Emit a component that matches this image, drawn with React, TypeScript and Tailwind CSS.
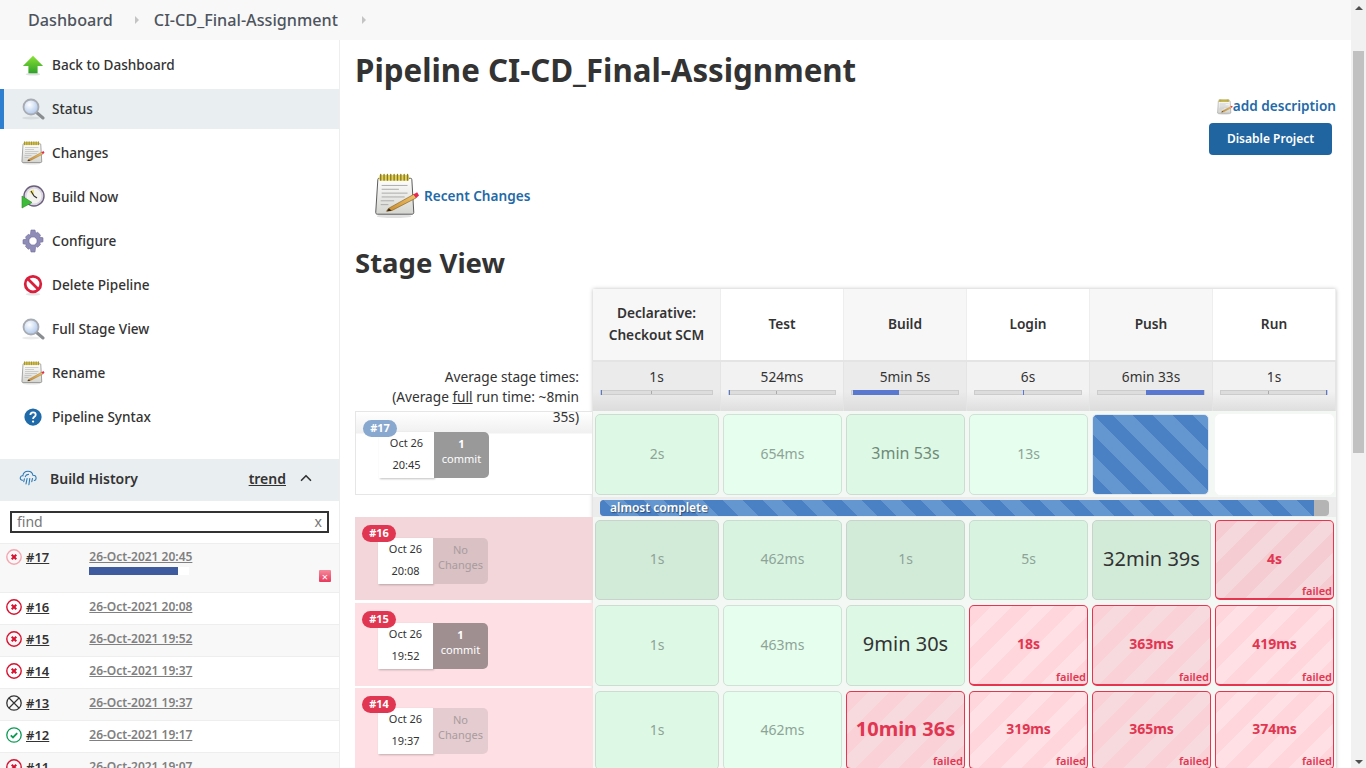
import { ChevronUp } from "lucide-react";

const NotepadIcon = ({ className }: { className: string }) => (
  <svg viewBox="0 0 48 48" className={className}>
    <defs>
      <linearGradient id="padBody" x1="0" y1="0" x2="0" y2="1">
        <stop offset="0" stopColor="#ffffff" />
        <stop offset="1" stopColor="#d4d4d0" />
      </linearGradient>
      <linearGradient id="padPencil" x1="0" y1="1" x2="1" y2="0">
        <stop offset="0" stopColor="#c98a2e" />
        <stop offset="1" stopColor="#f1c46a" />
      </linearGradient>
    </defs>
    <ellipse cx="21" cy="45" rx="18" ry="2" fill="#000" opacity="0.12" />
    <path d="M5 5.5h33c1 0 1.5.5 1.5 1.5l2 34c0 1.2-.6 2-1.8 2H3.5C2.3 43 1.700 42.200 1.800 41L4 7c0-1 .4-1.500 1-1.500z" fill="url(#padBody)" stroke="#555" strokeWidth="1" />
    <rect x="5.500" y="2" width="31" height="6" rx="1" fill="#e3d25a" />
    <path d="M7 1.500v6M10.500 1.500v6M14 1.500v6M17.500 1.500v6M21 1.500v6M24.500 1.500v6M28 1.500v6M31.500 1.500v6M35 1.500v6" stroke="#8a7a20" strokeWidth="1.400" strokeLinecap="round" />
    <path d="M8 13h27M8 17h18M8 21h27M8 25h24M7 29h14M7 33h8" stroke="#a9a9a9" strokeWidth="1" />
    <path d="M15 37l27-15 2 4-25 13-6 1z" fill="url(#padPencil)" stroke="#7a5a20" strokeWidth="0.600" />
    <path d="M41 22.500l4-2.500 2 3.500-3 2.500z" fill="#e8284f" />
    <path d="M13.500 39.800l2-3 3 2.500z" fill="#3a2a14" />
  </svg>
);

const ArrowUpIcon = () => (
  <svg viewBox="0 0 24 24" className="w-[22px] h-[22px]">
    <defs>
      <linearGradient id="upArrow" x1="0" y1="0" x2="0" y2="1">
        <stop offset="0" stopColor="#8ae234" />
        <stop offset="1" stopColor="#2fa12a" />
      </linearGradient>
    </defs>
    <ellipse cx="12" cy="22" rx="8" ry="1.500" fill="#000" opacity="0.12" />
    <path d="M12 2l11 11h-6v8H7v-8H1z" fill="url(#upArrow)" />
  </svg>
);

const SearchIcon = () => (
  <svg viewBox="0 0 24 24" className="w-[24px] h-[24px]">
    <defs>
      <radialGradient id="lens" cx="0.400" cy="0.350" r="0.700">
        <stop offset="0" stopColor="#ffffff" />
        <stop offset="1" stopColor="#a9c4ea" />
      </radialGradient>
    </defs>
    <ellipse cx="10" cy="21" rx="9" ry="1.500" fill="#000" opacity="0.08" />
    <path d="M15 15l7 6" stroke="#8a8d90" strokeWidth="3" strokeLinecap="round" />
    <circle cx="10" cy="10" r="7.500" fill="url(#lens)" stroke="#a8acb2" strokeWidth="1.800" />
  </svg>
);

const ClockPlayIcon = () => (
  <svg viewBox="0 0 24 24" className="w-[24px] h-[24px]">
    <circle cx="13" cy="11" r="10" fill="#d9d5e2" stroke="#6b5f7c" strokeWidth="1.400" />
    <circle cx="13" cy="11" r="7.500" fill="#f4f3f0" />
    <path d="M13 11V4.500A6.500 6.500 0 0 0 8 7z" fill="#f0e48a" />
    <path d="M13 11l-3-5M13 11l3 2" stroke="#333" strokeWidth="1.200" />
    <path d="M1 11l10 6.500L1 23z" fill="#3fbb3a" stroke="#2a8a26" strokeWidth="0.600" />
  </svg>
);

const GearIcon = () => (
  <svg viewBox="0 0 24 24" className="w-[24px] h-[24px]">
    <path
      d="M10 1h4l.7 3.200 2-.9 2.800 2.800-1 2 3.500.7v4l-3.500.7 1 2-2.800 2.800-2-1L14 23h-4l-.7-3.700-2 1-2.800-2.800 1-2L2 14.800v-4l3.500-.7-1-2 2.800-2.800 2 .9z"
      fill="#8f8cb8"
      stroke="#6f6c98"
      strokeWidth="0.600"
    />
    <circle cx="12" cy="12" r="4.200" fill="#ffffff" stroke="#6f6c98" strokeWidth="0.800" />
  </svg>
);

const NoEntryIcon = () => (
  <svg viewBox="0 0 24 24" className="w-[22px] h-[22px]">
    <ellipse cx="12" cy="22" rx="8" ry="1.500" fill="#000" opacity="0.10" />
    <circle cx="12" cy="11" r="8.500" fill="#fff" stroke="#d81f3c" strokeWidth="3" />
    <path d="M6 5l12 12" stroke="#d81f3c" strokeWidth="3" />
  </svg>
);

const HelpIcon = () => (
  <svg viewBox="0 0 24 24" className="w-[18px] h-[18px]">
    <circle cx="12" cy="12" r="11.500" fill="#1f6aa8" />
    <path d="M8.500 9.300c0-2.200 1.600-3.500 3.600-3.500s3.500 1.200 3.500 3.100c0 2.900-3.500 2.700-3.500 5.600" fill="none" stroke="#fff" strokeWidth="2.400" />
    <circle cx="12.100" cy="18" r="1.500" fill="#fff" />
  </svg>
);

const RainIcon = () => (
  <svg viewBox="0 0 20 20" fill="none" stroke="#2a78b8" strokeWidth="1.200" strokeLinecap="round" className="w-[18px] h-[18px]">
    <path d="M4 12.500C2 12.500 1 11 1.500 9.300 2 7.800 3.300 7.300 4.300 7.500 4.700 4.500 7 2.500 10 2.500c3 0 5 2 5.500 4.500 1.900 0 3.500 1.300 3.500 3.200 0 1.300-.8 2.300-2 2.500" />
    <path d="M7 8.500c.5-1.700 2-2.500 3.500-2.500M6 11l-.7 3M9 10.500l-1.200 6M12 10.500l-1 7M15 10.500l-.8 3.500" />
  </svg>
);

const StatusIcon = ({ kind }: { kind: string }) => {
  if (kind === "ok") {
    return (
      <svg viewBox="0 0 16 16" fill="none" className="w-[16px] h-[16px] shrink-0">
        <circle cx="8" cy="8" r="7.200" stroke="#0b9b54" strokeWidth="1.300" />
        <path d="M4.800 8.300l2.200 2.200 4.200-4.300" stroke="#0b9b54" strokeWidth="1.800" />
      </svg>
    );
  }
  if (kind === "aborted") {
    return (
      <svg viewBox="0 0 16 16" fill="none" className="w-[16px] h-[16px] shrink-0">
        <circle cx="8" cy="8" r="7.200" stroke="#333" strokeWidth="1.300" />
        <path d="M3 3l10 10M13 3L3 13" stroke="#333" strokeWidth="1.200" />
      </svg>
    );
  }
  return (
    <svg viewBox="0 0 16 16" fill="none" className="w-[16px] h-[16px] shrink-0">
      <circle cx="8" cy="8" r="7.200" stroke={kind === "running" ? "#f5a6b0" : "#d9112f"} strokeWidth="1.400" />
      <path d="M5.700 5.700l4.600 4.600M10.300 5.700l-4.600 4.600" stroke="#d9112f" strokeWidth="2" />
    </svg>
  );
};

const navItems = [
  { label: "Back to Dashboard", icon: <ArrowUpIcon /> },
  { label: "Status", icon: <SearchIcon />, active: true },
  { label: "Changes", icon: <NotepadIcon className="w-[24px] h-[24px]" /> },
  { label: "Build Now", icon: <ClockPlayIcon /> },
  { label: "Configure", icon: <GearIcon /> },
  { label: "Delete Pipeline", icon: <NoEntryIcon /> },
  { label: "Full Stage View", icon: <SearchIcon /> },
  { label: "Rename", icon: <NotepadIcon className="w-[24px] h-[24px]" /> },
  { label: "Pipeline Syntax", icon: <HelpIcon /> },
];

const historyRows = [
  { id: "#16", date: "26-Oct-2021 20:08", kind: "fail" },
  { id: "#15", date: "26-Oct-2021 19:52", kind: "fail" },
  { id: "#14", date: "26-Oct-2021 19:37", kind: "fail" },
  { id: "#13", date: "26-Oct-2021 19:37", kind: "aborted" },
  { id: "#12", date: "26-Oct-2021 19:17", kind: "ok" },
  { id: "#11", date: "26-Oct-2021 19:07", kind: "fail" },
];

const Sidebar = () => (
  <aside className="w-[340px] shrink-0 border-r border-[#eeeeee] overflow-hidden">
    <nav className="pt-[5px] flex flex-col gap-[4px]">
      {navItems.map((item) => (
        <a
          key={item.label}
          className={
            item.active
              ? "flex items-center h-[40px] pl-[17px] border-l-4 border-[#2f7fd0] bg-[#e9eef1] text-[13.6px] font-medium text-[#333333]"
              : "flex items-center h-[40px] pl-[21px] text-[13.6px] font-medium text-[#333333]"
          }
        >
          <span className="w-[24px] flex justify-center shrink-0">{item.icon}</span>
          <span className="ml-[7px]">{item.label}</span>
        </a>
      ))}
    </nav>

    <div className="mt-[22px] flex items-center h-[42px] bg-[#e9eef1] pl-[19px] pr-[24px] pb-[4px]">
      <RainIcon />
      <span className="ml-[13px] text-[14px] font-semibold text-[#333333]">Build History</span>
      <span className="ml-auto text-[14px] font-semibold text-[#333333] underline">trend</span>
      <ChevronUp className="ml-[11px] w-[18px] h-[18px] text-[#333333]" strokeWidth={2.200} />
    </div>

    <div className="px-[10px] pt-[10px] pb-[10px]">
      <div className="flex items-center justify-between h-[22px] border-2 border-[#333333] pl-[5px] pr-[5px] pb-[2px] text-[14px] text-[#777777]">
        <span>find</span>
        <span>x</span>
      </div>
    </div>

    <div className="relative h-[50px] bg-[#f8f8f8] border-y border-[#eeeeee] flex pl-[6px] pt-[5px]">
      <StatusIcon kind="running" />
      <span className="ml-[4px] text-[13px] leading-[16px] font-semibold text-[#333333] underline">#17</span>
      <div className="ml-[40px]">
        <div className="text-[12px] leading-[16px] font-semibold text-[#808080] underline">26-Oct-2021 20:45</div>
        <div className="mt-[2px] w-[100px] h-[8px] bg-white">
          <div className="w-[89px] h-[8px] bg-[#3f5ba0]" />
        </div>
      </div>
      <span className="absolute right-[8px] top-[26px] w-[12px] h-[12px] flex items-center justify-center rounded-[1px] bg-[linear-gradient(#f58a9c,#e8385a)] text-white text-[11px] leading-none">×</span>
    </div>

    {historyRows.map((row, i) => (
      <div
        key={row.id}
        className={
          i % 2 === 1
            ? "h-[32px] bg-[#f8f8f8] border-b border-[#eeeeee] flex pl-[6px] pt-[6px]"
            : "h-[32px] bg-white border-b border-[#eeeeee] flex pl-[6px] pt-[6px]"
        }
      >
        <StatusIcon kind={row.kind} />
        <span className="ml-[4px] text-[13px] leading-[16px] font-semibold text-[#333333] underline">{row.id}</span>
        <span className="ml-[40px] text-[12px] leading-[16px] font-semibold text-[#808080] underline">{row.date}</span>
      </div>
    ))}
  </aside>
);

const stageHeads = [
  { name: "Declarative: Checkout SCM", alt: true },
  { name: "Test", alt: false },
  { name: "Build", alt: true },
  { name: "Login", alt: false },
  { name: "Push", alt: true },
  { name: "Run", alt: false },
];

const averages = [
  { time: "1s", left: "0%", width: "1%", tick: "45%" },
  { time: "524ms", left: "0%", width: "1%", tick: "44%" },
  { time: "5min 5s", left: "1%", width: "43%", tick: "" },
  { time: "6s", left: "45%", width: "1%", tick: "" },
  { time: "6min 33s", left: "45%", width: "55%", tick: "" },
  { time: "1s", left: "99%", width: "1%", tick: "44%" },
];

type CellData = { text: string; size: string; tone: string; color?: string };

const toneClasses: Record<string, string> = {
  okA: "bg-[#ddf9e5] border-[#ccdcd1]",
  okB: "bg-[#e5feed] border-[#cfe2d5]",
  okDarkA: "bg-[#d2ebd9] border-[#c8d4cb]",
  okDarkB: "bg-[#d8f4e1] border-[#c8dccf]",
  run: "mr-[2px] bg-[repeating-linear-gradient(45deg,#4a80c4_0,#4a80c4_14px,#6496cf_14px,#6496cf_28px)] border-[#dfe6ee]",
  failA: "bg-[repeating-linear-gradient(135deg,#ffd6db_0,#ffd6db_15px,#ffe1e5_15px,#ffe1e5_30px)] border-[#e8354f] border-b-2",
  failB: "bg-[repeating-linear-gradient(135deg,#f9d1d6_0,#f9d1d6_15px,#f7dade_15px,#f7dade_30px)] border-[#e8354f] border-b-2",
  failDark: "bg-[repeating-linear-gradient(135deg,#f4ccd1_0,#f4ccd1_15px,#f4d8db_15px,#f4d8db_30px)] border-[#e8354f] border-b-2",
  empty: "bg-white border-white",
};

const sizeClasses: Record<string, string> = {
  sm: "text-[14px]",
  md: "text-[16px]",
  lg: "text-[20px]",
};

const Cell = ({ cell }: { cell: CellData }) => {
  const failed = cell.tone.startsWith("fail");
  return (
    <div className="pt-[3px] pb-[2px] px-[2px] min-w-0">
      <div className={`relative h-full rounded-[5px] border flex items-center justify-center pb-[3px] ${toneClasses[cell.tone]}`}>
        <span
          className={`${sizeClasses[cell.size]} ${failed ? "font-bold text-[#e13651]" : cell.color ?? "text-[#8ea397]"}`}
        >
          {cell.text}
        </span>
        {failed && (
          <span className="absolute right-[1px] bottom-0 text-[11px] leading-[14px] font-semibold text-[#e13651]">failed</span>
        )}
      </div>
    </div>
  );
};

const row17: CellData[] = [
  { text: "2s", size: "sm", tone: "okA" },
  { text: "654ms", size: "sm", tone: "okB" },
  { text: "3min 53s", size: "md", tone: "okA", color: "text-[#6f8a79]" },
  { text: "13s", size: "sm", tone: "okB" },
  { text: "", size: "sm", tone: "run" },
  { text: "", size: "sm", tone: "empty" },
];
const row16: CellData[] = [
  { text: "1s", size: "sm", tone: "okDarkA" },
  { text: "462ms", size: "sm", tone: "okDarkB" },
  { text: "1s", size: "sm", tone: "okDarkA" },
  { text: "5s", size: "sm", tone: "okDarkB" },
  { text: "32min 39s", size: "lg", tone: "okDarkA", color: "text-[#333333]" },
  { text: "4s", size: "sm", tone: "failDark" },
];
const row15: CellData[] = [
  { text: "1s", size: "sm", tone: "okA" },
  { text: "463ms", size: "sm", tone: "okB" },
  { text: "9min 30s", size: "lg", tone: "okA", color: "text-[#333333]" },
  { text: "18s", size: "sm", tone: "failA" },
  { text: "363ms", size: "sm", tone: "failB" },
  { text: "419ms", size: "sm", tone: "failA" },
];
const row14: CellData[] = [
  { text: "1s", size: "sm", tone: "okA" },
  { text: "462ms", size: "sm", tone: "okB" },
  { text: "10min 36s", size: "lg", tone: "failB" },
  { text: "319ms", size: "sm", tone: "failA" },
  { text: "365ms", size: "sm", tone: "failB" },
  { text: "374ms", size: "sm", tone: "failA" },
];

const BuildCard = ({
  id,
  date,
  time,
  badge,
  panel,
  commit,
}: {
  id: string;
  date: string;
  time: string;
  badge: string;
  panel: string;
  commit: boolean;
}) => (
  <>
    <span className={`absolute left-[7px] top-[8px] h-[17px] w-[34px] rounded-full flex items-center justify-center text-[11px] font-bold text-white ${badge}`}>
      {id}
    </span>
    <div className="flex ml-[23px] w-[110px] h-[46px]">
      <div className="w-[55px] bg-white shadow-[1px_1px_2px_rgba(0,0,0,0.25)] text-center text-[11px] leading-[22px] text-[#333333]">
        <div>{date}</div>
        <div>{time}</div>
      </div>
      <div className={`w-[55px] rounded-r-[5px] text-center text-[11px] leading-[15px] pt-[4px] ${panel}`}>
        {commit ? (
          <>
            <div className="font-bold">1</div>
            <div>commit</div>
          </>
        ) : (
          <>
            <div>No</div>
            <div>Changes</div>
          </>
        )}
      </div>
    </div>
  </>
);

const StageView = () => (
  <div className="flex mt-[7px] text-[#333333]">
    <div className="w-[238px] shrink-0">
      <div className="h-[71px]" />
      <div className="relative z-10 h-[51px] pt-[7px] pl-[20px] pr-[14px] text-right text-[13.7px] leading-[20px]">
        Average stage times:
        <br />
        (Average <span className="underline">full</span> run time: ~8min 35s)
      </div>
      <div className="h-[86px] pb-[2px]">
        <div className="relative h-full border border-[#e6e6e6] bg-[linear-gradient(#ffffff_0,#f0f0f0_21px,#ffffff_22px)] pt-[20px]">
          <BuildCard id="#17" date="Oct 26" time="20:45" badge="bg-[#88a8cf]" panel="bg-[#999999] text-white" commit />
        </div>
      </div>
      <div className="h-[20px]" />
      <div className="h-[86px] pb-[3px]">
        <div className="relative h-full bg-[#f3d6da] pt-[21px]">
          <BuildCard id="#16" date="Oct 26" time="20:08" badge="bg-[#e13651]" panel="bg-[#d9c1c4] text-[#a89c9e]" commit={false} />
        </div>
      </div>
      <div className="h-[85px] pb-[2px]">
        <div className="relative h-full bg-[#fee0e4] pt-[20px]">
          <BuildCard id="#15" date="Oct 26" time="19:52" badge="bg-[#e13651]" panel="bg-[#a08f90] text-white" commit />
        </div>
      </div>
      <div className="h-[84px]">
        <div className="relative h-full bg-[#fee0e4] pt-[20px]">
          <BuildCard id="#14" date="Oct 26" time="19:37" badge="bg-[#e13651]" panel="bg-[#e5ccd0] text-[#a89c9e]" commit={false} />
        </div>
      </div>
    </div>

    <div className="w-[743px] shrink-0 shadow-[0_0_4px_rgba(0,0,0,0.25)] bg-[#f4f8f5]">
      <div className="grid grid-cols-[128px_repeat(5,123px)] h-[71px]">
        {stageHeads.map((head) => (
          <div
            key={head.name}
            className={
              head.alt
                ? "flex items-center justify-center text-center px-[10px] pb-[2px] text-[13.7px] leading-[22px] font-semibold bg-[#f7f7f7] border-r border-[#eeeeee]"
                : "flex items-center justify-center text-center px-[10px] pb-[2px] text-[13.7px] leading-[22px] font-semibold bg-white border-r border-[#eeeeee]"
            }
          >
            {head.name}
          </div>
        ))}
      </div>
      <div className="grid grid-cols-[128px_repeat(5,123px)] h-[51px]">
        {averages.map((avg, i) => (
          <div
            key={i}
            className={
              i % 2 === 0
                ? "px-[7px] pt-[5px] text-center text-[13.7px] leading-[20px] border-r border-t-2 border-[#e4e4e4] bg-[linear-gradient(#ebebeb_60%,#dcdcdc)]"
                : "px-[7px] pt-[5px] text-center text-[13.7px] leading-[20px] border-r border-t-2 border-[#e4e4e4] bg-[linear-gradient(#f2f2f2_60%,#dedede)]"
            }
          >
            {avg.time}
            <div className="relative mt-[3px] h-[5px] bg-[#dddddd] border border-[#cccccc]">
              {avg.tick && <div className="absolute top-0 h-full w-px bg-[#aaaaaa]" style={{ left: avg.tick }} />}
              <div className="absolute top-[-1px] h-[5px] bg-[#5b78d0]" style={{ left: avg.left, width: avg.width }} />
            </div>
          </div>
        ))}
      </div>
      <div className="grid grid-cols-[128px_repeat(5,123px)] h-[86px]">
        {row17.map((cell, i) => (
          <Cell key={i} cell={cell} />
        ))}
      </div>
      <div className="h-[20px] px-[7px] pt-[3px] bg-[#ececec]">
        <div className="h-[16px] rounded-[4px] bg-[#b4b4b4] overflow-hidden">
          <div className="w-[714px] h-full pl-[10px] text-[12px] leading-[16px] font-semibold text-white [text-shadow:1px_1px_1px_rgba(0,0,0,0.4)] bg-[repeating-linear-gradient(45deg,#4a80c4_0,#4a80c4_14px,#6496cf_14px,#6496cf_28px)]">
            almost complete
          </div>
        </div>
      </div>
      <div className="grid grid-cols-[128px_repeat(5,123px)] h-[85px]">
        {row16.map((cell, i) => (
          <Cell key={i} cell={cell} />
        ))}
      </div>
      <div className="grid grid-cols-[128px_repeat(5,123px)] h-[86px]">
        {row15.map((cell, i) => (
          <Cell key={i} cell={cell} />
        ))}
      </div>
      <div className="grid grid-cols-[128px_repeat(5,123px)] h-[84px]">
        {row14.map((cell, i) => (
          <Cell key={i} cell={cell} />
        ))}
      </div>
    </div>
  </div>
);

export default function App() {
  return (
    <div className="flex h-screen overflow-hidden bg-white font-['Noto_Sans',sans-serif] text-[#333333]">
      <div className="flex-1 min-w-0 flex flex-col">
        {/* Breadcrumbs */}
        <header className="h-[40px] shrink-0 bg-[#f8f8f8] flex items-center pl-[28px] text-[16.2px] font-medium text-[#4d545d]">
          <span>Dashboard</span>
          <span className="ml-[22px] w-0 h-0 border-y-[4px] border-y-transparent border-l-[4px] border-l-[#c4c4c4]" />
          <span className="ml-[15px]">CI-CD_Final-Assignment</span>
          <span className="ml-[24px] w-0 h-0 border-y-[4px] border-y-transparent border-l-[4px] border-l-[#c4c4c4]" />
        </header>

        <div className="flex flex-1 min-h-0">
          <Sidebar />

          <main className="flex-1 min-w-0 pl-[15px] pr-[15px] overflow-hidden">
            <h1 className="mt-[9px] text-[31.25px] leading-[42px] font-bold text-[#333333]">Pipeline CI-CD_Final-Assignment</h1>

            <div className="flex flex-col items-end mt-[5px]">
              <a className="flex items-center text-[13.6px] leading-[20px] font-semibold text-[#1f6aa8]">
                <NotepadIcon className="w-[16px] h-[16px] mt-[2px]" />
                add description
              </a>
              <button className="mt-[7px] mr-[4px] w-[123px] h-[32px] rounded-[4px] bg-[#20659f] text-white text-[12px] font-semibold">
                Disable Project
              </button>
            </div>

            <div className="flex items-center mt-[18px] ml-[19px]">
              <NotepadIcon className="w-[46px] h-[46px]" />
              <a className="ml-[4px] text-[13.6px] font-semibold text-[#1f6aa8]">Recent Changes</a>
            </div>

            <h2 className="mt-[25px] text-[27.5px] leading-[38px] font-bold text-[#333333]">Stage View</h2>

            <StageView />
          </main>
        </div>
      </div>

      {/* Page scrollbar */}
      <div className="w-[15px] shrink-0 bg-[#f1f1f1] flex flex-col items-center">
        <svg viewBox="0 0 8 4" className="w-[8px] h-[4px] mt-[6px]">
          <path d="M4 0l4 4H0z" fill="#505050" />
        </svg>
        <div className="mt-[41px] w-[11px] h-[402px] bg-[#c1c1c1]" />
        <svg viewBox="0 0 8 4" className="w-[8px] h-[4px] mt-auto mb-[4px]">
          <path d="M0 0h8L4 4z" fill="#505050" />
        </svg>
      </div>
    </div>
  );
}
